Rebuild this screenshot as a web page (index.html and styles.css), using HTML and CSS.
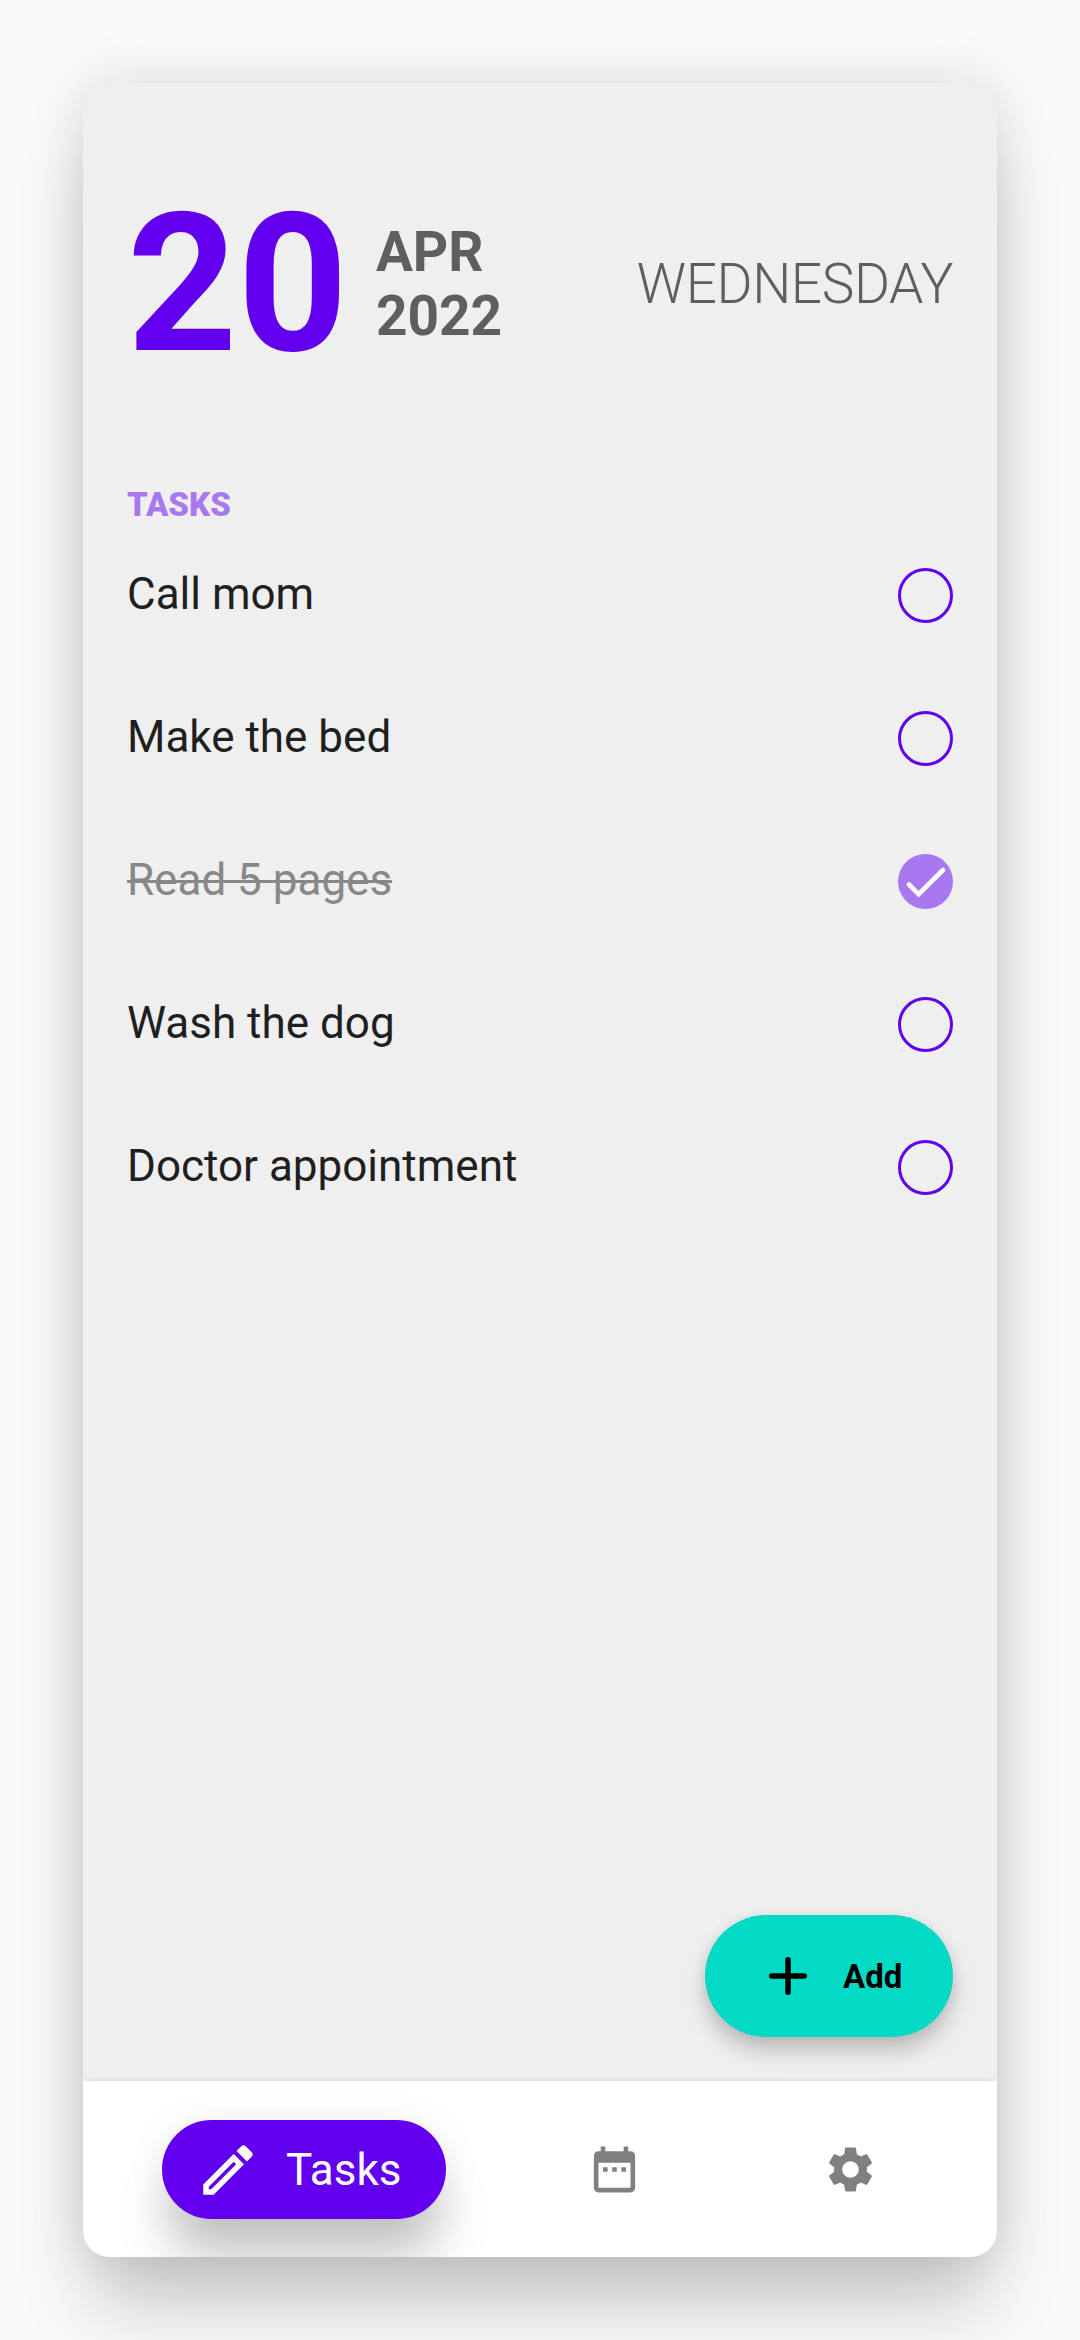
FILE: index.html
```html
<!DOCTYPE html>
<html lang="en">
<head>
<meta charset="utf-8">
<title>Tasks</title>
<link rel="stylesheet" href="styles.css">
</head>
<body>
<main class="card">
  <header class="date">
    <div class="day">20</div>
    <div class="month"><span>APR</span><span>2022</span></div>
    <div class="weekday">WEDNESDAY</div>
  </header>
  <section class="tasks">
    <h2 class="heading">TASKS</h2>
    <ul class="list">
      <li class="task"><span class="label">Call mom</span><span class="check"></span></li>
      <li class="task"><span class="label">Make the bed</span><span class="check"></span></li>
      <li class="task done"><span class="label">Read 5 pages</span><span class="check"><svg viewBox="0 0 55 55" width="55" height="55"><path d="M11 30.5l9.7 9.7L45 16"/></svg></span></li>
      <li class="task"><span class="label">Wash the dog</span><span class="check"></span></li>
      <li class="task"><span class="label">Doctor appointment</span><span class="check"></span></li>
    </ul>
  </section>
  <button class="add"><svg viewBox="0 0 38 38" width="38" height="38"><path d="M19 2.75v32.5M2.75 19h32.5"/></svg><span>Add</span></button>
  <nav class="nav">
    <a class="tab active"><svg viewBox="0 0 24 24" width="66" height="66"><path fill-rule="evenodd" d="M3 17.25V21h3.75L17.81 9.94l-3.75-3.75L3 17.25zM5.92 19H5v-.92l9.06-9.06.92.92L5.92 19zM20.71 5.63l-2.34-2.34c-.2-.2-.45-.29-.71-.29s-.51.1-.7.29l-1.83 1.83 3.75 3.75 1.83-1.83c.39-.39.39-1.02 0-1.41z"/></svg><span>Tasks</span></a>
    <a class="tab calendar"><svg viewBox="0 0 24 24" width="55" height="55"><path fill-rule="evenodd" d="M19 4h-1V2h-2v2H8V2H6v2H5c-1.11 0-1.99.9-1.99 2L3 20c0 1.1.89 2 2 2h14c1.1 0 2-.9 2-2V6c0-1.1-.9-2-2-2zm0 16H5V9h14v11zM9 11H7v2h2v-2zm4 0h-2v2h2v-2zm4 0h-2v2h2v-2z"/></svg></a>
    <a class="tab settings"><svg viewBox="0 0 24 24" width="55" height="55"><path fill-rule="evenodd" d="M19.14 12.94c.04-.3.06-.61.06-.94 0-.32-.02-.64-.07-.94l2.03-1.58c.18-.14.23-.41.12-.61l-1.92-3.32c-.12-.22-.37-.29-.59-.22l-2.39.96c-.5-.38-1.03-.7-1.62-.94l-.36-2.54c-.04-.24-.24-.41-.48-.41h-3.84c-.24 0-.43.17-.47.41l-.36 2.54c-.59.24-1.13.57-1.62.94l-2.39-.96c-.22-.08-.47 0-.59.22L2.74 8.87c-.12.21-.08.47.12.61l2.03 1.58c-.05.3-.09.63-.09.94s.02.64.07.94l-2.03 1.58c-.18.14-.23.41-.12.61l1.92 3.32c.12.22.37.29.59.22l2.39-.96c.5.38 1.03.7 1.62.94l.36 2.54c.05.24.24.41.48.41h3.84c.24 0 .44-.17.47-.41l.36-2.54c.59-.24 1.13-.56 1.62-.94l2.39.96c.22.08.47 0 .59-.22l1.92-3.32c.12-.22.07-.47-.12-.61l-2.01-1.58zM12 15.6c-1.98 0-3.6-1.62-3.6-3.6s1.62-3.6 3.6-3.6 3.6 1.62 3.6 3.6-1.62 3.6-3.6 3.6z"/></svg></a>
  </nav>
</main>
</body>
</html>
```
FILE: styles.css
```css
* { box-sizing: border-box; }
body {
  margin: 0;
  width: 1080px;
  height: 2340px;
  padding: 83px;
  overflow: hidden;
  background: #fafafa;
  font-family: Roboto, sans-serif;
  color: #1f1f1f;
}
.card {
  display: flex;
  flex-direction: column;
  width: 914px;
  height: 2174px;
  border-radius: 27px;
  overflow: hidden;
  background: #efefef;
  box-shadow: 0 60px 77px -10px rgba(0, 0, 0, .19), 0 0 55px rgba(0, 0, 0, .13);
}
.date {
  display: flex;
  align-items: center;
  height: 226px;
  margin: 88px 44px 0;
}
.day {
  font-size: 192.5px;
  line-height: 226px;
  font-weight: 700;
  color: #6200ee;
}
.month {
  display: flex;
  flex-direction: column;
  margin-left: 28px;
  font-size: 55px;
  line-height: 64px;
  font-weight: 700;
  color: #5f5f5f;
}
.weekday {
  margin-left: auto;
  font-size: 55px;
  font-weight: 300;
  letter-spacing: -.4px;
  color: #5f5f5f;
}
.tasks { margin: 88px 44px 0; }
.heading {
  margin: 0;
  font-size: 33px;
  line-height: 40px;
  font-weight: 900;
  color: #a878f0;
}
.list { margin: -1px 0 0; padding: 0; list-style: none; }
.task {
  display: flex;
  align-items: center;
  justify-content: space-between;
  height: 143px;
}
.label { padding-bottom: 3px; font-size: 44px; line-height: 52px; }
.done .label { color: #888; text-decoration: line-through 3px; }
.check {
  width: 55px;
  height: 55px;
  border: 3px solid #6200ee;
  border-radius: 50%;
}
.done .check { border: 0; background: #a878f0; }
.check svg { display: block; fill: none; stroke: #fafafa; stroke-width: 4.6; stroke-linecap: round; }
.add {
  display: flex;
  align-items: center;
  gap: 36px;
  width: 248px;
  height: 122px;
  margin: auto 44px 44px auto;
  padding: 0 0 0 64px;
  border: 0;
  border-radius: 61px;
  background: #03dac5;
  box-shadow: 0 14px 22px rgba(0, 0, 0, .2), 0 1px 14px rgba(0, 0, 0, .07);
  color: #000;
  font: 700 33px/40px Roboto, sans-serif;
}
.add span { padding-top: 2px; }
.add svg { fill: none; stroke: #000; stroke-width: 5.5; stroke-linecap: round; }
.nav {
  display: flex;
  align-items: flex-start;
  height: 176px;
  padding: 39px 0 0 79px;
  background: #fff;
  box-shadow: 0 0 8px rgba(0, 0, 0, .08);
}
.tab { display: flex; align-items: center; height: 99px; fill: #808080; }
.active {
  width: 284px;
  padding-left: 33px;
  gap: 25px;
  border-radius: 50px;
  background: #6200ee;
  box-shadow: 0 44px 50px -4px rgba(0, 0, 0, .22), 0 0 40px rgba(0, 0, 0, .07);
  fill: #fff;
  color: #fff;
  font-size: 44px;
}
.calendar { margin-left: 141px; }
.settings { margin-left: 181px; }
```
